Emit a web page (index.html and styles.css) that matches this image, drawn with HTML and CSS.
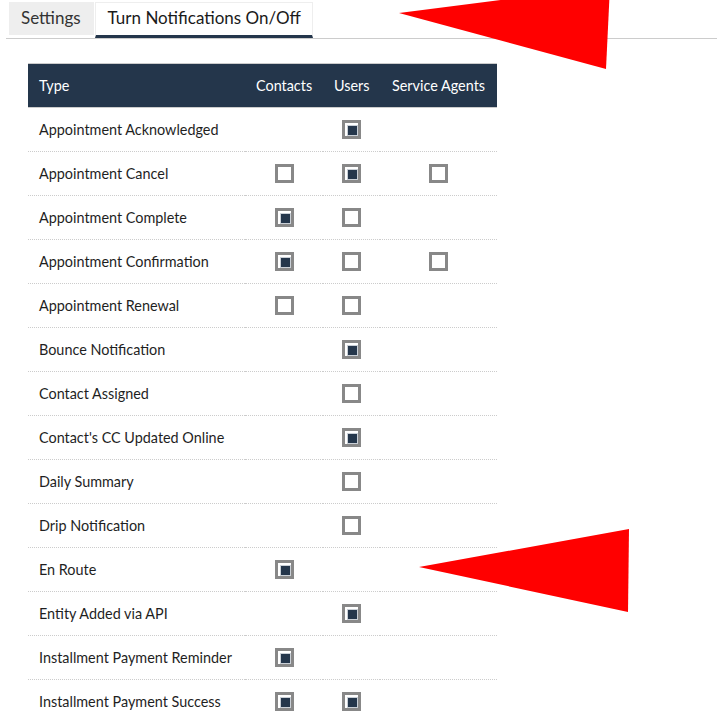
FILE: index.html
```html
<!DOCTYPE html>
<html lang="en">
<head>
    <meta charset="UTF-8">
    <title>Notification Settings</title>
    <link rel="stylesheet" href="styles.css">
</head>
<body>

    <div class="tabs">
        <div class="tab">Settings</div>
        <div class="tab active">Turn Notifications On/Off</div>
    </div>

    <table class="notify-table">
        <colgroup>
            <col class="col-type">
            <col class="col-contacts">
            <col class="col-users">
            <col class="col-agents">
        </colgroup>
        <thead>
            <tr>
                <th class="type">Type</th>
                <th>Contacts</th>
                <th>Users</th>
                <th>Service Agents</th>
            </tr>
        </thead>
        <tbody>
            <tr><td class="type">Appointment Acknowledged</td><td></td><td><span class="check on"></span></td><td></td></tr>
            <tr><td class="type">Appointment Cancel</td><td><span class="check"></span></td><td><span class="check on"></span></td><td><span class="check"></span></td></tr>
            <tr><td class="type">Appointment Complete</td><td><span class="check on"></span></td><td><span class="check"></span></td><td></td></tr>
            <tr><td class="type">Appointment Confirmation</td><td><span class="check on"></span></td><td><span class="check"></span></td><td><span class="check"></span></td></tr>
            <tr><td class="type">Appointment Renewal</td><td><span class="check"></span></td><td><span class="check"></span></td><td></td></tr>
            <tr><td class="type">Bounce Notification</td><td></td><td><span class="check on"></span></td><td></td></tr>
            <tr><td class="type">Contact Assigned</td><td></td><td><span class="check"></span></td><td></td></tr>
            <tr><td class="type">Contact's CC Updated Online</td><td></td><td><span class="check on"></span></td><td></td></tr>
            <tr><td class="type">Daily Summary</td><td></td><td><span class="check"></span></td><td></td></tr>
            <tr><td class="type">Drip Notification</td><td></td><td><span class="check"></span></td><td></td></tr>
            <tr><td class="type">En Route</td><td><span class="check on"></span></td><td></td><td></td></tr>
            <tr><td class="type">Entity Added via API</td><td></td><td><span class="check on"></span></td><td></td></tr>
            <tr><td class="type">Installment Payment Reminder</td><td><span class="check on"></span></td><td></td><td></td></tr>
            <tr><td class="type">Installment Payment Success</td><td><span class="check on"></span></td><td><span class="check on"></span></td><td></td></tr>
        </tbody>
    </table>

    <!-- annotation arrows drawn over the screenshot -->
    <svg class="arrows" width="717" height="713" viewBox="0 0 717 713">
        <polygon points="399,13 610,-14 606,69" fill="#ff0000"/>
        <polygon points="419,567 629,529 628,612" fill="#ff0000"/>
    </svg>

</body>
</html>
```

FILE: styles.css
```css
:root {
    --navy: #24364b;
    --line: #cccccc;
    --text: #1f1f1f;
}

body {
    margin: 0;
    font-family: 'Lato', 'Noto Sans', sans-serif;
    color: var(--text);
    background: #fff;
    position: relative;
}

/* Tabs */
.tabs {
    display: flex;
    margin-left: 6px;
    padding: 2px 0 0 3px;
    height: 36px;
    border-bottom: 1px solid var(--line);
    box-sizing: content-box;
}

.tab {
    height: 33px;
    line-height: 32px;
    padding: 0 13px 0 12px;
    font-size: 17px;
    color: #333;
    background: #eeeeee;
    box-sizing: border-box;
}

.tab.active {
    height: 36px;
    margin-left: 1px;
    background: #fff;
    color: #1a1a1a;
    border: 1px solid #eeeeee;
    border-bottom: 3px solid var(--navy);
    line-height: 30px;
    padding: 0 11px 0 12px;
}

/* Table */
.notify-table {
    margin: 24px 0 0 28px;
    border-collapse: collapse;
    table-layout: fixed;
    width: 469px;
    font-size: 14.4px;
}

.col-type { width: 217px; }
.col-contacts { width: 78px; }
.col-users { width: 57px; }
.col-agents { width: 117px; }

.notify-table th {
    background: var(--navy);
    color: #fff;
    font-weight: 400;
    height: 43px;
    padding: 0 11px;
    text-align: center;
    white-space: nowrap;
    border-top: 1px solid var(--line);
    border-bottom: 1px solid var(--line);
}

.notify-table td {
    height: 43px;
    padding: 0 11px;
    text-align: center;
    vertical-align: middle;
    border-bottom: 1px dotted var(--line);
}

.notify-table .type {
    text-align: left;
}

/* Custom checkboxes */
.check {
    display: inline-block;
    width: 19px;
    height: 19px;
    border: 3px solid #888;
    box-sizing: border-box;
    vertical-align: middle;
    position: relative;
    background: #fff;
}

.check.on::after {
    content: "";
    position: absolute;
    left: 2px;
    top: 2px;
    width: 9px;
    height: 9px;
    background: var(--navy);
    border: 1px solid #c9cfd6;
}

.arrows {
    position: absolute;
    left: 0;
    top: 0;
    pointer-events: none;
}
```
